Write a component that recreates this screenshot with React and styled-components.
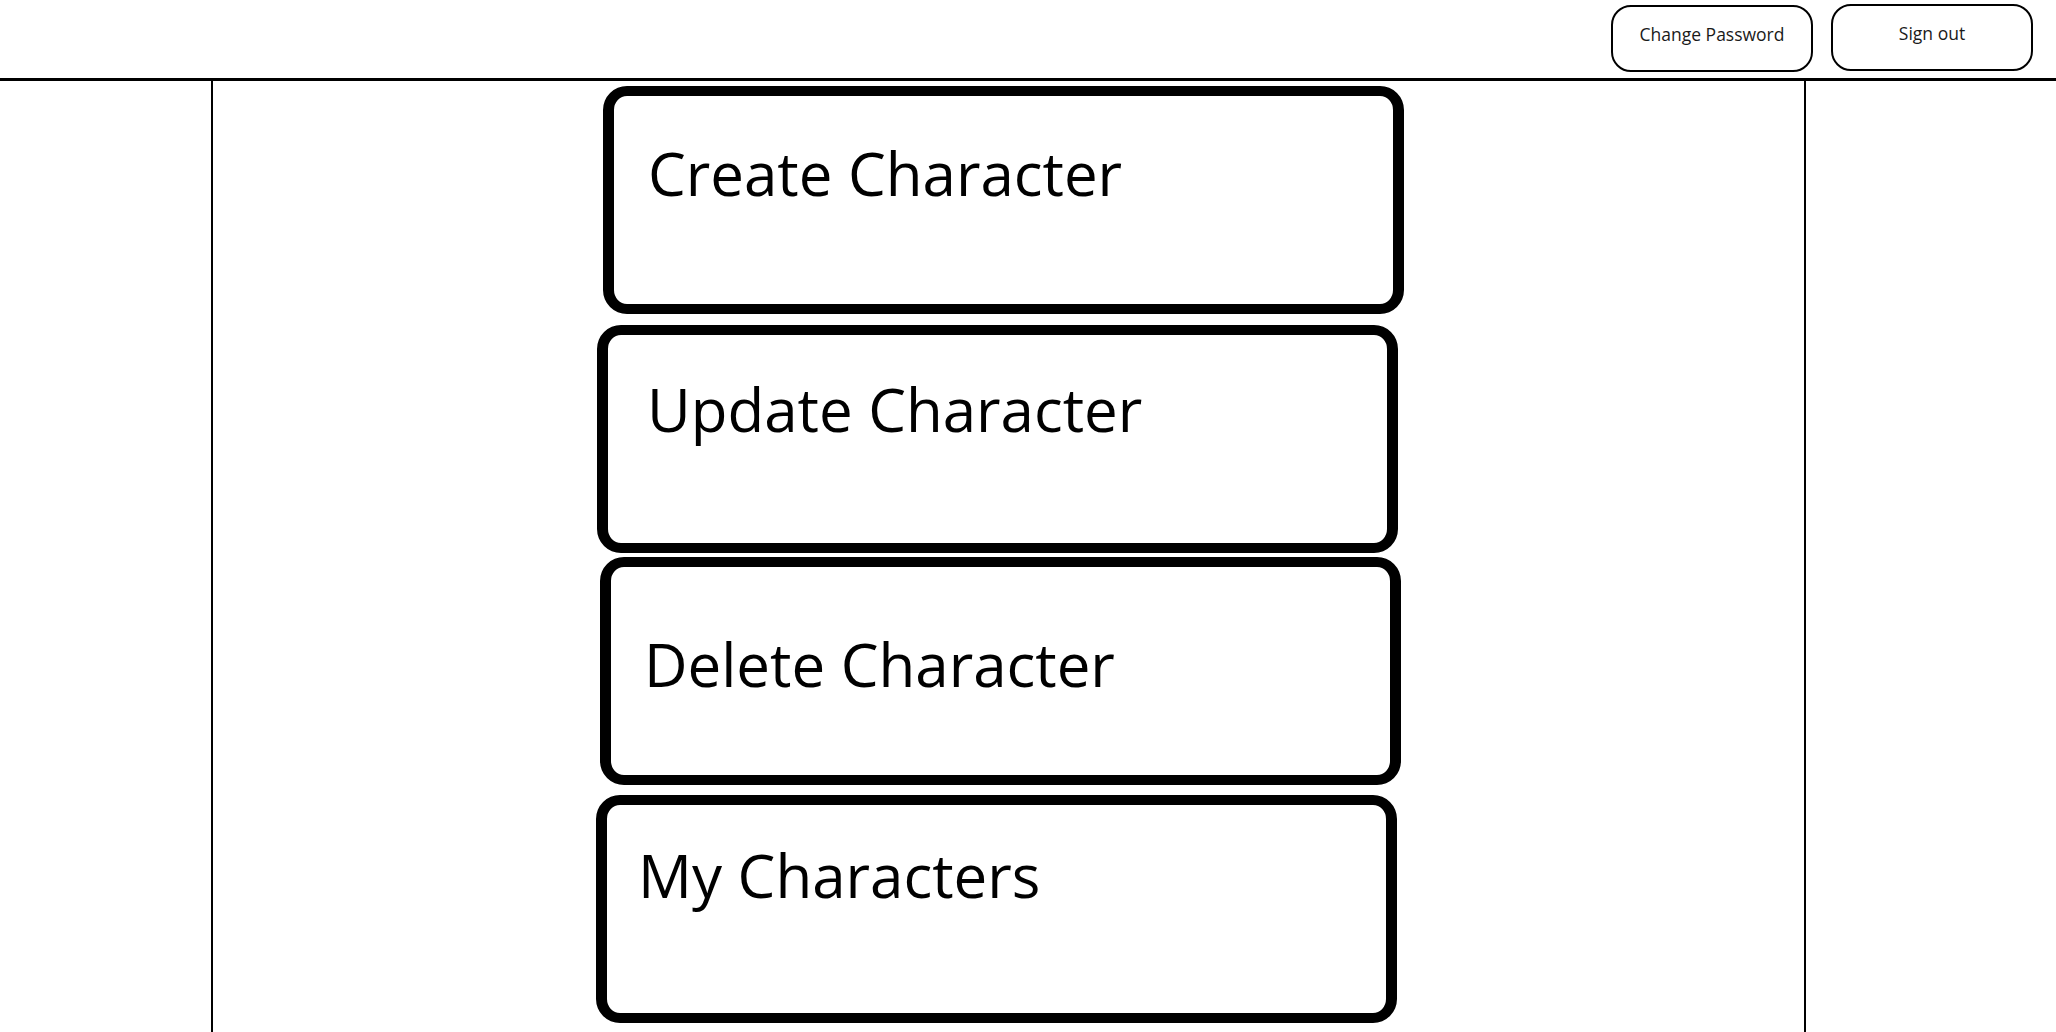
import styled, { createGlobalStyle } from "styled-components";

const GlobalStyle = createGlobalStyle`
  html, body {
    margin: 0;
    padding: 0;
    background: #ffffff;
    font-family: "Open Sans", "Noto Sans", Arial, sans-serif;
  }
`;

const cards = [
  { label: "Create Character", top: 5, nudge: 7, textTop: 41, indent: 34 },
  { label: "Update Character", top: 11, nudge: 1, textTop: 38, indent: 39 },
  { label: "Delete Character", top: 4, nudge: 4, textTop: 61, indent: 33 },
  { label: "My Characters", top: 10, nudge: 0, textTop: 34, indent: 31 },
];

const App = () => {
  return (
    <>
      <GlobalStyle />
      <Page>
        <TopBar>
          <HeaderButton $offset={5}>Change Password</HeaderButton>
          <HeaderButton $offset={4}>Sign out</HeaderButton>
        </TopBar>
        <Body>
          <SideColumn />
          <Main>
            {cards.map((card) => (
              <Card
                key={card.label}
                $top={card.top}
                $nudge={card.nudge}
                $indent={card.indent}
              >
                <CardTitle $top={card.textTop}>{card.label}</CardTitle>
              </Card>
            ))}
          </Main>
          <SideColumn />
        </Body>
      </Page>
    </>
  );
};

export default App;

const Page = styled.div`
  width: 2056px;
  height: 1032px;
  overflow: hidden;
  display: flex;
  flex-direction: column;
`;

const TopBar = styled.header`
  height: 78px;
  flex-shrink: 0;
  display: flex;
  justify-content: flex-end;
  align-items: flex-start;
  gap: 18px;
  padding-right: 23px;
  border-bottom: 3px solid #000;
`;

const HeaderButton = styled.button`
  margin-top: ${(p) => p.$offset}px;
  width: 202px;
  height: 67px;
  box-sizing: border-box;
  padding: 15px 0 0;
  display: flex;
  justify-content: center;
  align-items: flex-start;
  background: #fff;
  border: 2px solid #000;
  border-radius: 20px;
  font-family: "Open Sans", "Noto Sans", Arial, sans-serif;
  font-size: 17.5px;
  color: #1a1a1a;
  cursor: pointer;
`;

const Body = styled.div`
  flex: 1;
  display: grid;
  grid-template-columns: 213px 1fr 252px;
`;

const SideColumn = styled.aside`
  &:first-child {
    border-right: 2px solid #000;
  }
  &:last-child {
    border-left: 2px solid #000;
  }
`;

const Main = styled.main`
  display: flex;
  flex-direction: column;
  align-items: flex-start;
  padding-left: 383px;
`;

const Card = styled.div`
  margin-top: ${(p) => p.$top}px;
  margin-left: ${(p) => p.$nudge}px;
  width: 801px;
  height: 228px;
  flex-shrink: 0;
  box-sizing: border-box;
  border: 10px solid #000;
  border-left-width: 11px;
  border-right-width: 11px;
  border-radius: 24px;
  background: #fff;
  padding-left: ${(p) => p.$indent}px;
`;

const CardTitle = styled.h2`
  margin: ${(p) => p.$top}px 0 0;
  font-family: "Open Sans", "Noto Sans", Arial, sans-serif;
  font-weight: 400;
  font-size: 60px;
  line-height: 72px;
  color: #000;
`;
